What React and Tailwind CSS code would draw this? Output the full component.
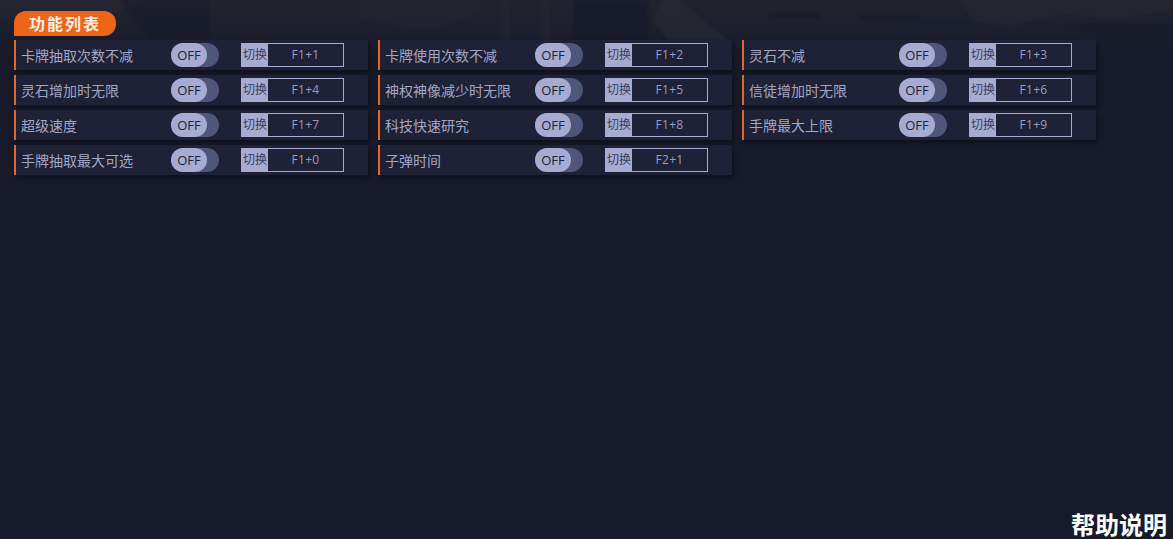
const items = [
  ['卡牌抽取次数不减', 'F1+1'],
  ['卡牌使用次数不减', 'F1+2'],
  ['灵石不减', 'F1+3'],
  ['灵石增加时无限', 'F1+4'],
  ['神权神像减少时无限', 'F1+5'],
  ['信徒增加时无限', 'F1+6'],
  ['超级速度', 'F1+7'],
  ['科技快速研究', 'F1+8'],
  ['手牌最大上限', 'F1+9'],
  ['手牌抽取最大可选', 'F1+0'],
  ['子弹时间', 'F2+1'],
]

function Row({ name, hotkey }) {
  return (
    <div className="flex h-[30px] w-[354px] items-center border-l-2 border-[#ee6418] bg-[#1f2136] pl-[5px] shadow-[2px_3px_4px_rgba(0,0,0,0.35)]">
      <span className="w-[150px] pt-[2px] text-[14px] leading-none text-[#a3a7c6]">{name}</span>
      <div className="h-6 w-12 rounded-full bg-[#50557a]">
        <div className="flex h-6 w-9 items-center justify-center rounded-full bg-[#a7abd2] pt-px text-[13px] text-[#20233a]">OFF</div>
      </div>
      <div className="ml-[22px] flex h-6 w-[103px] border border-[#a7abd2]">
        <div className="flex w-[26px] items-center justify-center whitespace-nowrap bg-[#a7abd2] pb-px text-[12px] text-[#3a3d5c]">切换</div>
        <div className="flex flex-1 items-center justify-center pb-px text-[12px] tracking-[0.3px] text-[#9a9ec0]">{hotkey}</div>
      </div>
    </div>
  )
}

export default function App() {
  return (
    <div className="relative flex h-[539px] w-[1173px] flex-col overflow-hidden bg-[#171a2a] pl-[14px] font-['Open_Sans','Noto_Sans_CJK_SC',sans-serif]">
      <div className="absolute inset-x-0 top-0 h-[60px] bg-gradient-to-b from-[#22232f] to-[#171a2a]" />
      <svg className="absolute left-0 top-0 blur-[1px]" width="1173" height="60" viewBox="0 0 1173 60" fill="none">
        <path d="M0 0h150l-40 14-110 6z" fill="#2a2a36" opacity="0.4" />
        <path d="M120 0h90v36l-60 4z" fill="#14162a" opacity="0.35" />
        <path d="M360 0h120v14l-50 16-70-10z" fill="#2a2b38" opacity="0.3" />
        <path d="M500 0h10v40h-10zM540 0h10v40h-10z" fill="#2a2b38" opacity="0.3" />
        <path d="M573 0h75v40h-75z" fill="#171a2c" opacity="0.7" />
        <path d="M680 0h-18l-10 20 16 20h60z" fill="#2b2b37" opacity="0.5" />
        <path d="M770 14h50v4h-50zM860 16h60v4h-60z" fill="#171a2a" opacity="0.7" />
        <path d="M900 20h70l-10 20h-60z" fill="#1a1d2f" opacity="0.5" />
        <path d="M960 0h213v10l-60 10-50-6-50 12-40-4z" fill="#2d2c38" opacity="0.35" />
        <path d="M1060 24l113 0v16h-60z" fill="#161a2b" opacity="0.4" />
      </svg>
      <div className="relative mt-[11px] flex h-[25px] w-[102px] items-center justify-center rounded-t-[12px] rounded-r-[12px] bg-[#ee6418] text-[16px] font-bold tracking-[2px] text-[#fbeee6]">
        功能列表
      </div>
      <div className="relative mt-1 grid grid-cols-[354px_354px_354px] gap-x-[10px] gap-y-[5px]">
        {items.map(([name, hotkey]) => (
          <Row key={hotkey} name={name} hotkey={hotkey} />
        ))}
      </div>
      <div className="absolute bottom-0 right-[6px] text-[24px] font-bold leading-[28px] text-white">帮助说明</div>
    </div>
  )
}
